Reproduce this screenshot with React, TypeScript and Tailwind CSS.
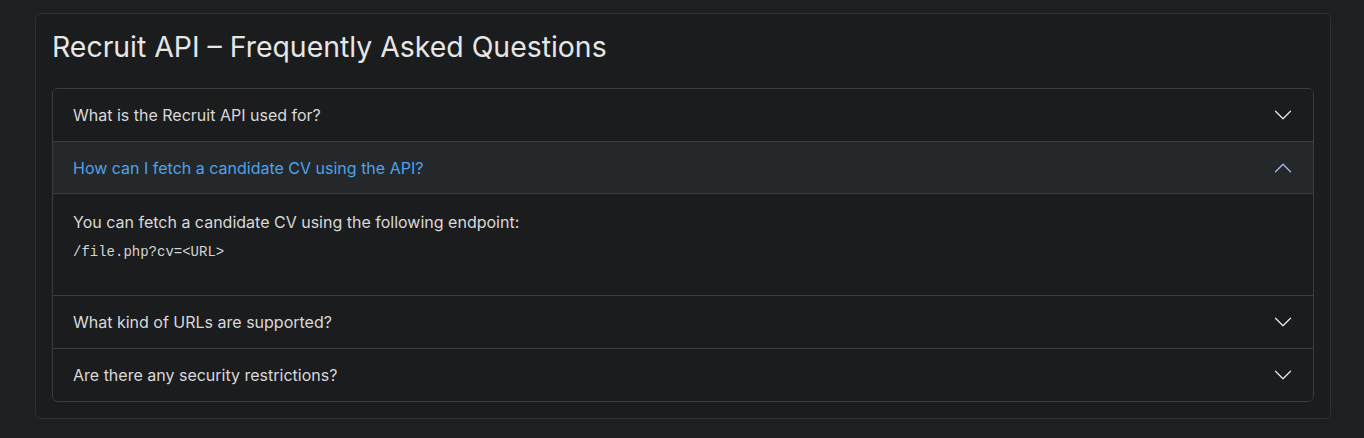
import { useState } from "react";

const faqs = [
    {
        id: "purpose",
        question: "What is the Recruit API used for?",
    },
    {
        id: "fetch-cv",
        question: "How can I fetch a candidate CV using the API?",
    },
    {
        id: "urls",
        question: "What kind of URLs are supported?",
    },
    {
        id: "security",
        question: "Are there any security restrictions?",
    },
];

function Chevron({ open }: { open: boolean }) {
    return (
        <svg
            viewBox="0 0 16 16"
            className={`h-5 w-5 shrink-0 ${open ? "rotate-180" : ""}`}
            fill="none"
            stroke={open ? "#a9b6f2" : "#e8e8e8"}
            strokeLinecap="round"
            strokeLinejoin="round"
        >
            <path d="M2 5L8 11L14 5" />
        </svg>
    );
}

export default function App() {
    const [openId, setOpenId] = useState<string | null>("fetch-cv");

    return (
        <div
            className="min-h-[438px] bg-[#1d2022] pt-[13px] pr-[33px] pl-[35px]"
            style={{ fontFamily: "Inter, 'Noto Sans', sans-serif" }}
        >
            <div className="rounded-md border border-[#2e3032] bg-[#1b1c1e] p-4">
                <h3 className="mb-[24px] text-[28.4px] leading-[34px] font-normal text-[#e6e6e6]">
                    Recruit API – Frequently Asked Questions
                </h3>

                <div className="overflow-hidden rounded-md border border-[#3a3c3f]">
                    {faqs.map((item, index) => {
                        const open = openId === item.id;
                        return (
                            <div
                                key={item.id}
                                className={index > 0 ? "border-t border-[#3a3c3f]" : ""}
                            >
                                <button
                                    type="button"
                                    onClick={() => setOpenId(open ? null : item.id)}
                                    className={`flex h-[52px] w-full items-center justify-between px-5 text-left text-base ${
                                        open
                                            ? "border-b border-[#3a3c3f] bg-[#25282a] text-[#4ea2ea]"
                                            : "bg-[#1b1c1e] text-[#d9d9d9]"
                                    }`}
                                >
                                    <span>{item.question}</span>
                                    <Chevron open={open} />
                                </button>

                                {open && item.id === "fetch-cv" && (
                                    <div className="px-5 py-4 text-[#d9d9d9]">
                                        <p className="mb-[7px] text-base leading-6">
                                            You can fetch a candidate CV using the following
                                            endpoint:
                                        </p>
                                        <pre
                                            className="mb-4 text-[14px] leading-[21px] text-[#d4d4d4]"
                                            style={{ fontFamily: "'DejaVu Sans Mono', monospace" }}
                                        >
                                            <code>/file.php?cv=&lt;URL&gt;</code>
                                        </pre>
                                    </div>
                                )}
                            </div>
                        );
                    })}
                </div>
            </div>
        </div>
    );
}
